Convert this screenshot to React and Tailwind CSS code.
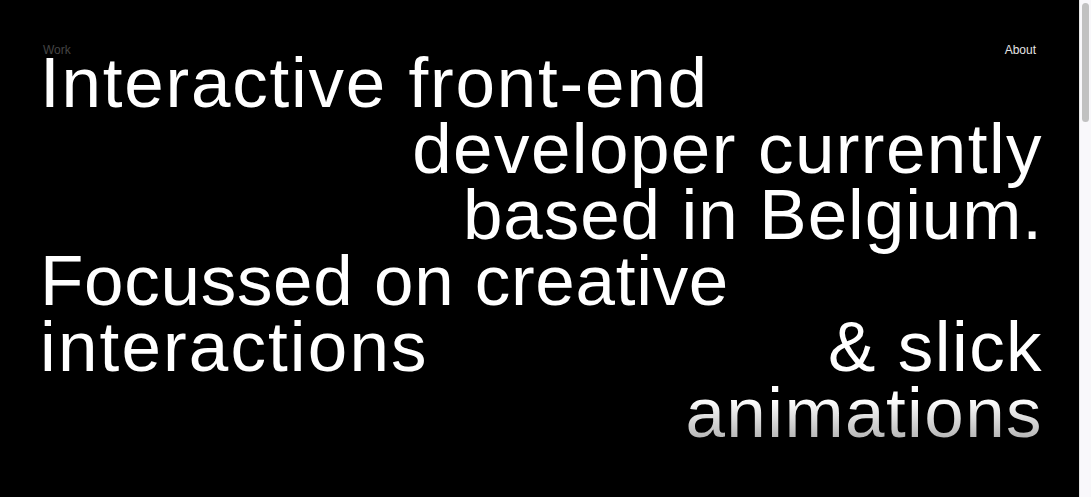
import React from "react";

export default function App() {
  return (
    <div className="flex h-[497px] overflow-hidden bg-black text-white" style={{ fontFamily: '"Liberation Sans", Arial, sans-serif' }}>
      <main className="relative flex-1 pl-10 pr-[36px]">
        <nav className="absolute left-10 right-[43px] top-[42px] flex justify-between text-[12px] leading-4">
          <a className="text-[#444444] pl-[3px]">Work</a>
          <a className="text-[#e5e5e5]">About</a>
        </nav>
        <h1 className="pt-[50px] text-[71px] font-normal leading-[66px] tracking-[0.02em]">
          <div className="text-left tracking-[0.025em]">Interactive front-end</div>
          <div className="text-right">developer currently</div>
          <div className="text-right tracking-[0.013em]">based in Belgium.</div>
          <div className="text-left tracking-[0.01em]">Focussed on creative</div>
          <div className="flex justify-between">
            <span className="tracking-[0.03em]">interactions</span>
            <span>&amp; slick</span>
          </div>
          <div className="flex justify-end">
            <span className="bg-gradient-to-b from-white from-30% to-[#a8a8a8] bg-clip-text text-transparent">animations</span>
          </div>
        </h1>
      </main>
      <div className="w-[12px] shrink-0 border-l border-[#e6e6e6] bg-[#f9f8fb] px-[2px] pt-[3px]">
        <div className="h-[119px] rounded-full bg-[#c1c1c1]" />
      </div>
    </div>
  );
}
